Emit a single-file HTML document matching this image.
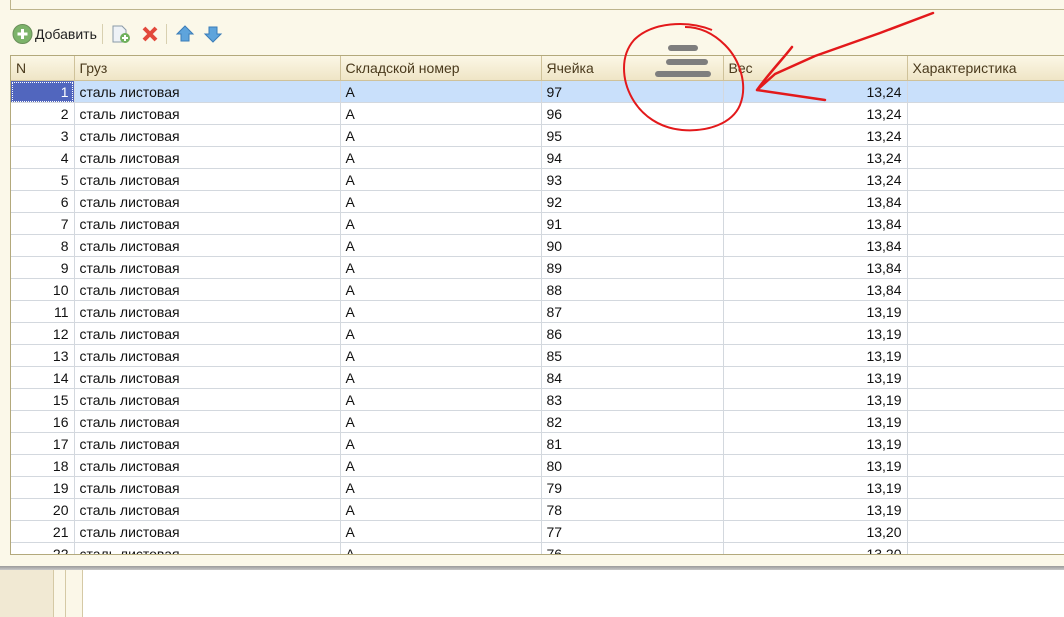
<!DOCTYPE html>
<html><head><meta charset="utf-8"><style>
body{margin:0;width:1064px;height:617px;overflow:hidden;background:#fbf8e9;font-family:"Liberation Sans",sans-serif;font-size:14px;position:relative}
.a{position:absolute}
#top{left:10px;top:-1px;width:1060px;height:10px;border-left:1px solid #bdb48c;border-bottom:1px solid #bdb48c}
#tbl{left:10px;top:55px;width:1060px;height:498px;border:1px solid #b3a97c;background:#fff;overflow:hidden}
table{border-collapse:collapse;table-layout:fixed;width:1060px}
th{height:24px;padding:0 5px;text-align:left;font-weight:normal;color:#4a3a1c;background:linear-gradient(#fbf7e6,#efe5c6);border-right:1px solid #cfc29a;border-bottom:1px solid #cfc29a;font-size:14px}
td{height:21px;padding:0 5px;border-right:1px solid #d3d8de;border-bottom:1px solid #d3d8de;white-space:nowrap;overflow:hidden;color:#111}
td.n,td.w{text-align:right}
tr.s td{background:#c9e0fb}
tr.s td.n{background:#5166be;color:#fff;outline:1px dotted #fff;outline-offset:-2px}
.tb{top:24px;height:20px;display:flex;align-items:center}
</style></head><body>
<div class="a" id="top"></div>
<div class="a tb" style="left:12px">
<svg width="21" height="20"><circle cx="10.5" cy="10" r="9.5" fill="#7cb36a" stroke="#6a8f5a"/><path d="M10.5 5v10M5.5 10h10" stroke="#fff" stroke-width="3"/></svg>
<span style="margin-left:2px;color:#222">Добавить</span>
<span style="width:1px;height:20px;background:#d8d0b0;margin:0 7px 0 5px"></span>
<svg width="22" height="20"><path d="M3 2h9l4 4v12H3z" fill="#eef2f6" stroke="#8a9aa8"/><circle cx="15" cy="14" r="5" fill="#6fb05c"/><path d="M15 11v6M12 14h6" stroke="#fff" stroke-width="2"/></svg>
<svg width="22" height="20" style="margin-left:8px"><path d="M4 4l12 12M16 4L4 16" stroke="#e2493c" stroke-width="4"/></svg>
<span style="width:1px;height:20px;background:#d8d0b0;margin:0 8px 0 4px"></span>
<svg width="20" height="20"><path d="M10 2l8 8h-4v7H6v-7H2z" fill="#5ea4dc" stroke="#3a7cb8"/></svg>
<svg width="20" height="20" style="margin-left:8px"><path d="M10 18l8-8h-4V3H6v7H2z" fill="#5ea4dc" stroke="#3a7cb8"/></svg>
</div>
<div class="a" id="tbl"><table>
<colgroup><col style="width:63px"><col style="width:266px"><col style="width:201px"><col style="width:182px"><col style="width:184px"><col></colgroup>
<tr><th>N</th><th>Груз</th><th>Складской номер</th><th>Ячейка</th><th>Вес</th><th>Характеристика</th></tr>
<tr class="s"><td class="n">1</td><td>сталь листовая</td><td>А</td><td>97</td><td class="w">13,24</td><td></td></tr>
<tr><td class="n">2</td><td>сталь листовая</td><td>А</td><td>96</td><td class="w">13,24</td><td></td></tr>
<tr><td class="n">3</td><td>сталь листовая</td><td>А</td><td>95</td><td class="w">13,24</td><td></td></tr>
<tr><td class="n">4</td><td>сталь листовая</td><td>А</td><td>94</td><td class="w">13,24</td><td></td></tr>
<tr><td class="n">5</td><td>сталь листовая</td><td>А</td><td>93</td><td class="w">13,24</td><td></td></tr>
<tr><td class="n">6</td><td>сталь листовая</td><td>А</td><td>92</td><td class="w">13,84</td><td></td></tr>
<tr><td class="n">7</td><td>сталь листовая</td><td>А</td><td>91</td><td class="w">13,84</td><td></td></tr>
<tr><td class="n">8</td><td>сталь листовая</td><td>А</td><td>90</td><td class="w">13,84</td><td></td></tr>
<tr><td class="n">9</td><td>сталь листовая</td><td>А</td><td>89</td><td class="w">13,84</td><td></td></tr>
<tr><td class="n">10</td><td>сталь листовая</td><td>А</td><td>88</td><td class="w">13,84</td><td></td></tr>
<tr><td class="n">11</td><td>сталь листовая</td><td>А</td><td>87</td><td class="w">13,19</td><td></td></tr>
<tr><td class="n">12</td><td>сталь листовая</td><td>А</td><td>86</td><td class="w">13,19</td><td></td></tr>
<tr><td class="n">13</td><td>сталь листовая</td><td>А</td><td>85</td><td class="w">13,19</td><td></td></tr>
<tr><td class="n">14</td><td>сталь листовая</td><td>А</td><td>84</td><td class="w">13,19</td><td></td></tr>
<tr><td class="n">15</td><td>сталь листовая</td><td>А</td><td>83</td><td class="w">13,19</td><td></td></tr>
<tr><td class="n">16</td><td>сталь листовая</td><td>А</td><td>82</td><td class="w">13,19</td><td></td></tr>
<tr><td class="n">17</td><td>сталь листовая</td><td>А</td><td>81</td><td class="w">13,19</td><td></td></tr>
<tr><td class="n">18</td><td>сталь листовая</td><td>А</td><td>80</td><td class="w">13,19</td><td></td></tr>
<tr><td class="n">19</td><td>сталь листовая</td><td>А</td><td>79</td><td class="w">13,19</td><td></td></tr>
<tr><td class="n">20</td><td>сталь листовая</td><td>А</td><td>78</td><td class="w">13,19</td><td></td></tr>
<tr><td class="n">21</td><td>сталь листовая</td><td>А</td><td>77</td><td class="w">13,20</td><td></td></tr>
<tr><td class="n">22</td><td>сталь листовая</td><td>А</td><td>76</td><td class="w">13,20</td><td></td></tr>
</table></div>
<div class="a" style="left:0;top:566px;width:1064px;height:4px;background:linear-gradient(#9a9a9a,#c8c8c8)"></div>
<div class="a" style="left:0;top:570px;width:53px;height:47px;background:#f1e9d3;border-right:1px solid #d5c9a5"></div>
<div class="a" style="left:54px;top:570px;width:11px;height:47px;background:#fbf7e8;border-right:1px solid #d5c9a5"></div>
<div class="a" style="left:66px;top:570px;width:16px;height:47px;background:#fbf7e8;border-right:1px solid #d5c9a5"></div>
<div class="a" style="left:83px;top:570px;width:981px;height:47px;background:#fff"></div>
<svg class="a" style="left:0;top:0" width="1064" height="617">
<g stroke="#7e7e7e" stroke-width="6" stroke-linecap="round"><path d="M671 48h24"/><path d="M669 62h36"/><path d="M658 74h50"/></g>
<path d="M712 30c-25-10-60-8-78 10-14 16-12 40-2 58 10 18 28 30 50 32 25 2 50-6 58-25 8-20 0-45-15-60-12-12-26-18-40-18" fill="none" stroke="#e3191b" stroke-width="2"/>
<path d="M933 13L880 33 815 56 775 74 757 90M757 90L825 100M757 90C770 72 782 60 792 47" fill="none" stroke="#e3191b" stroke-width="2.5" stroke-linecap="round" stroke-linejoin="round"/>
</svg>
</body></html>
